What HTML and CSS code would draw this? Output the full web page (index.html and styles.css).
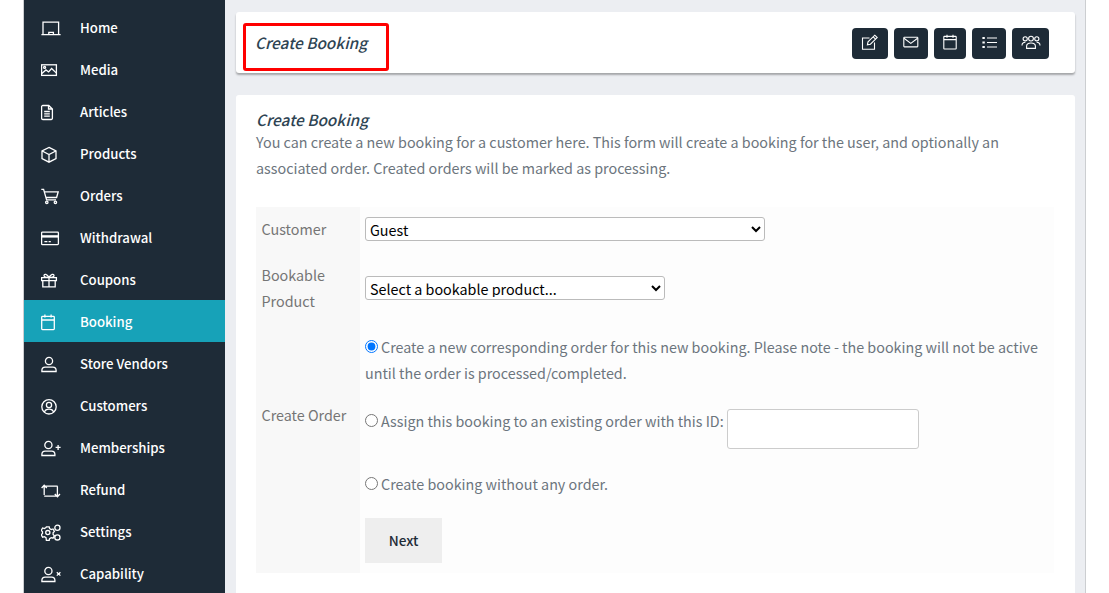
FILE: index.html
```html
<!DOCTYPE html>
<html lang="en">
<head>
<meta charset="utf-8">
<title>Create Booking</title>
<link rel="stylesheet" href="styles.css">
</head>
<body>
<div class="shell">
  <nav class="sidebar">
    <a class="item"><svg class="ico" viewBox="0 0 20 20"><path d="M2 15.5V3.2h15.6v12.3M.4 15.6h19.2M7.8 15.5v-2.2h4.6v2.2"/></svg><span>Home</span></a>
    <a class="item"><svg class="ico" viewBox="0 0 20 20"><rect x=".6" y="3.8" width="14.8" height="10.6"/><path d="M.8 12.5l4.2-3.6 2.6 2 3-3.4 4.6 4.4"/><circle cx="3.6" cy="6.4" r="1"/></svg><span>Media</span></a>
    <a class="item"><svg class="ico" viewBox="0 0 20 20"><path d="M7.8 2.5H1.8a1.2 1.2 0 0 0-1.2 1.2v11.6a1.2 1.2 0 0 0 1.2 1.2h8.4a1.2 1.2 0 0 0 1.2-1.2V6zM7.5 2.5V6h3.9M3.2 8.5h5.6M3.2 10.8h5.6M3.2 13.1h5.6"/></svg><span>Articles</span></a>
    <a class="item"><svg class="ico" viewBox="0 0 20 20"><path d="M8 2.4l7 3.6v7.6l-7 3.6-7-3.6V6zM1.2 6L8 9.6 14.8 6M8 9.6v7.4"/></svg><span>Products</span></a>
    <a class="item"><svg class="ico" viewBox="0 0 20 20"><path d="M.3 2.3h2.3l3 10.6h9.4M3.4 4.8h13.8l-1.6 5.7H5"/><circle cx="5.8" cy="15.3" r="1.2"/><circle cx="14.4" cy="15.3" r="1.2"/></svg><span>Orders</span></a>
    <a class="item"><svg class="ico" viewBox="0 0 20 20"><rect x=".6" y="3.2" width="16.8" height="12.4" rx=".8"/><path d="M.8 7.4h16.4" class="thick"/><path d="M3.4 12.7h3M7.6 12.7h2.2"/></svg><span>Withdrawal</span></a>
    <a class="item"><svg class="ico" viewBox="0 0 20 20"><path d="M.6 6.6h14.8v3H.6zM1.8 9.6v6.2h12.4V9.6M8 6.6v9.2M8 6.6C6.2 3 3 2.4 3 4.6c0 1.6 3 2 5 2zM8 6.6c1.8-3.6 5-4.2 5-2 0 1.6-3 2-5 2z"/></svg><span>Coupons</span></a>
    <a class="item active"><svg class="ico" viewBox="0 0 20 20"><rect x=".7" y="3.4" width="12.6" height="13.2" rx=".8"/><path d="M.8 7h12.4M3.9 1.5v3M10.1 1.5v3"/></svg><span>Booking</span></a>
    <a class="item"><svg class="ico" viewBox="0 0 20 20"><circle cx="8" cy="6" r="3.6"/><path d="M.9 16.5v-1.2c0-1.8 1.4-3.2 3.2-3.2h7.8c1.8 0 3.2 1.4 3.2 3.2v1.2z"/></svg><span>Store Vendors</span></a>
    <a class="item"><svg class="ico" viewBox="0 0 20 20"><circle cx="8" cy="9.8" r="7.2"/><circle cx="8" cy="8" r="2.6"/><path d="M3.4 15.2c.6-2 2.4-3 4.6-3s4 1 4.6 3"/></svg><span>Customers</span></a>
    <a class="item"><svg class="ico" viewBox="0 0 20 20"><circle cx="7.4" cy="6" r="3.6"/><path d="M.9 16.5v-1.2c0-1.8 1.4-3.2 3.2-3.2h6.6c1.8 0 3.2 1.4 3.2 3.2v1.2zM14.6 8.4h5M17.1 5.9v5"/></svg><span>Memberships</span></a>
    <a class="item"><svg class="ico" viewBox="0 0 20 20"><path d="M3.2 14V5.2h13.4M.6 7L3.2 4.2 5.8 7M16.4 5.2V15.2H3.2M13.8 13l2.6 2.8 2.6-2.8"/></svg><span>Refund</span></a>
    <a class="item"><svg class="ico" viewBox="0 0 20 20"><path d="M5.4 3.8h2.8l.4 1.8 1.6 1 1.8-.6 1.4 2.4-1.3 1.3v1.8l1.3 1.3-1.4 2.4-1.8-.6-1.6 1-.4 1.8H5.4L5 14.6l-1.6-1-1.8.6L.2 11.8l1.3-1.3V8.7L.2 7.4l1.4-2.4 1.8.6 1.6-1z"/><circle cx="6.8" cy="9.6" r="2.1"/><circle cx="16.4" cy="4.8" r="2.6"/><circle cx="16.4" cy="14.4" r="2.6"/></svg><span>Settings</span></a>
    <a class="item"><svg class="ico" viewBox="0 0 20 20"><circle cx="7.4" cy="6" r="3.6"/><path d="M.9 16.5v-1.2c0-1.8 1.4-3.2 3.2-3.2h6.6c1.8 0 3.2 1.4 3.2 3.2v1.2zM15.8 7.2l3.6 3.4M19.4 7.2l-3.6 3.4"/></svg><span>Capability</span></a>
  </nav>
  <main class="main">
    <header class="topbar">
      <div class="page-title"><h1 class="title">Create Booking</h1></div>
      <div class="actions">
        <button class="act w36" aria-label="Edit"><svg class="ico sm" viewBox="0 0 18 18"><path d="M8.5 4H1.5v11.3h12V8.6"/><path d="M6.4 10.8l.6-3L13.8 1.2l2.4 2.4-6.8 6.6z"/><path d="M12.2 2.8l2.4 2.4"/></svg></button>
        <button class="act w34" aria-label="Mail"><svg class="ico sm" viewBox="0 0 18 18"><rect x="1.8" y="3.3" width="14" height="9.6" rx=".6"/><path d="M2 4.2L8.8 9.4l6.8-5.2"/></svg></button>
        <button class="act w32" aria-label="Calendar"><svg class="ico sm" viewBox="0 0 18 18"><rect x="2.8" y="2.4" width="12.4" height="12.6" rx=".6"/><path d="M2.8 5.6h12.4M6 .8v3M12 .8v3"/></svg></button>
        <button class="act w34" aria-label="List"><svg class="ico sm" viewBox="0 0 18 18"><path d="M7 4h10M7 8.5h10M7 13h10"/><path class="bullet" d="M2.4 4h2.4M2.4 8.5h2.4M2.4 13h2.4"/></svg></button>
        <button class="act w37" aria-label="Group"><svg class="ico sm wide" viewBox="0 0 20 18"><circle cx="10" cy="4.6" r="2.4"/><circle cx="4.2" cy="4.8" r="2.1"/><circle cx="15.8" cy="4.8" r="2.1"/><path d="M5.6 14.4v-2.2c0-2 1.8-3.2 4.4-3.2s4.4 1.2 4.4 3.2v2.2zM1 11.4c0-2 1.2-3.2 3.4-3.2M19 11.4c0-2-1.2-3.2-3.4-3.2"/></svg></button>
      </div>
    </header>
    <section class="card">
      <h2 class="title">Create Booking</h2>
      <p class="intro">You can create a new booking for a customer here. This form will create a booking for the user, and optionally an associated order. Created orders will be marked as processing.</p>
      <table class="form">
        <tr>
          <th>Customer</th>
          <td><select class="sel w400"><option>Guest</option></select></td>
        </tr>
        <tr>
          <th>Bookable Product</th>
          <td><select class="sel w300"><option>Select a bookable product...</option></select></td>
        </tr>
        <tr>
          <th class="order-label">Create Order</th>
          <td class="orders">
            <p class="opt"><input type="radio" name="o" class="radio" checked>Create a new corresponding order for this new booking. Please note - the booking will not be active until the order is processed/completed.</p>
            <p class="opt mid"><input type="radio" name="o" class="radio">Assign this booking to an existing order with this ID: <input type="text" class="order-id"></p>
            <p class="opt"><input type="radio" name="o" class="radio">Create booking without any order.</p>
          </td>
        </tr>
        <tr>
          <th></th>
          <td><button class="next">Next</button></td>
        </tr>
      </table>
    </section>
  </main>
</div>
</body>
</html>
```
FILE: styles.css
```css
* { box-sizing: border-box; }
html, body { margin: 0; height: 100%; overflow: hidden; background: #fff; }
body { font-family: "Noto Sans CJK JP", "Noto Sans", sans-serif; font-size: 14.34px; color: #6c757d; }
.shell { display: flex; margin: 0 23px; height: 593px; border-left: 1px solid #ccced1; border-right: 1px solid #ccced1; overflow: hidden; }
.sidebar { width: 201px; flex: none; background: #1e2b37; padding-top: 6px; }
.item { display: flex; align-items: center; gap: 19px; height: 42px; padding-left: 17px; color: #fff; font-size: 13.2px; font-weight: 500; line-height: 40px; }
.item span { margin-top: 2px; }
.item.active { background: #17a2b8; }
.ico { width: 20px; height: 20px; flex: none; fill: none; stroke: #fff; stroke-width: 1.3; }
.item .ico { margin-top: 4px; }
.ico.sm { width: 18px; height: 18px; display: block; stroke-width: 1.1; }
.ico.wide { width: 20px; }
.ico .thick { stroke-width: 2.4; }
.ico .bullet { stroke-width: 1.8; }
.main { flex: 1; background: #eceef2; padding: 12px 10px 0 11px; }
.topbar { display: flex; justify-content: space-between; align-items: center; height: 61px; background: #fff; border-radius: 3px; padding: 0 26px 0 7px; box-shadow: 0 2px 2px rgba(0,0,0,.3); }
.page-title { width: 146px; height: 48px; margin-top: 9px; border: 3px solid #f00; border-radius: 3px; display: flex; align-items: center; padding: 0 0 9px 9px; }
.title { margin: 0; font-size: 15.4px; line-height: 25px; font-style: italic; font-weight: 500; color: #2e4453; white-space: nowrap; }
.actions { display: flex; gap: 6px; margin-top: 1px; }
.act { height: 31px; padding: 0; border: 0; border-radius: 4px; background: #1e2b37; display: flex; align-items: center; justify-content: center; }
.w32 { width: 32px; } .w34 { width: 34px; } .w36 { width: 36px; } .w37 { width: 37px; }
.card { margin-top: 22px; height: 520px; background: #fff; border-radius: 3px; padding: 12px 20px 0; }
.intro { margin: -3px 0 26px; line-height: 26px; }
.form { border-collapse: collapse; width: 798px; table-layout: fixed; }
.form th { width: 104px; background: #f8f8f8; padding: 9px 5px 11px 5.5px; font-weight: 400; text-align: left; line-height: 26px; color: #757575; vertical-align: middle; }
.form .order-label { padding-top: 8px; padding-bottom: 12px; }
.form td { background: #fdfdfd; padding: 10px 5px; line-height: 26px; vertical-align: middle; }
.form .orders { padding: 9px 5px 11px; }
.sel { display: block; height: 24px; margin-bottom: 2px; font: inherit; line-height: 20px; color: #000; background: #fff; border: 1px solid #bbb; border-radius: 3px; padding: 0 0 2px 0; }
.w400 { width: 400px; } .w300 { width: 300px; }
.opt { margin: 0; }
.mid { margin: 22px 0; }
.radio { margin: 0 3px 0 0; }
.order-id { width: 192px; height: 40px; margin-top: 1px; vertical-align: top; border: 1px solid #ccc; border-radius: 3px; background: #fff; }
.next { display: block; width: 77px; height: 45px; border: 0; background: #eee; color: #1e2b37; font: inherit; font-size: 13.6px; font-weight: 500; padding: 0 0 2px; }
```
